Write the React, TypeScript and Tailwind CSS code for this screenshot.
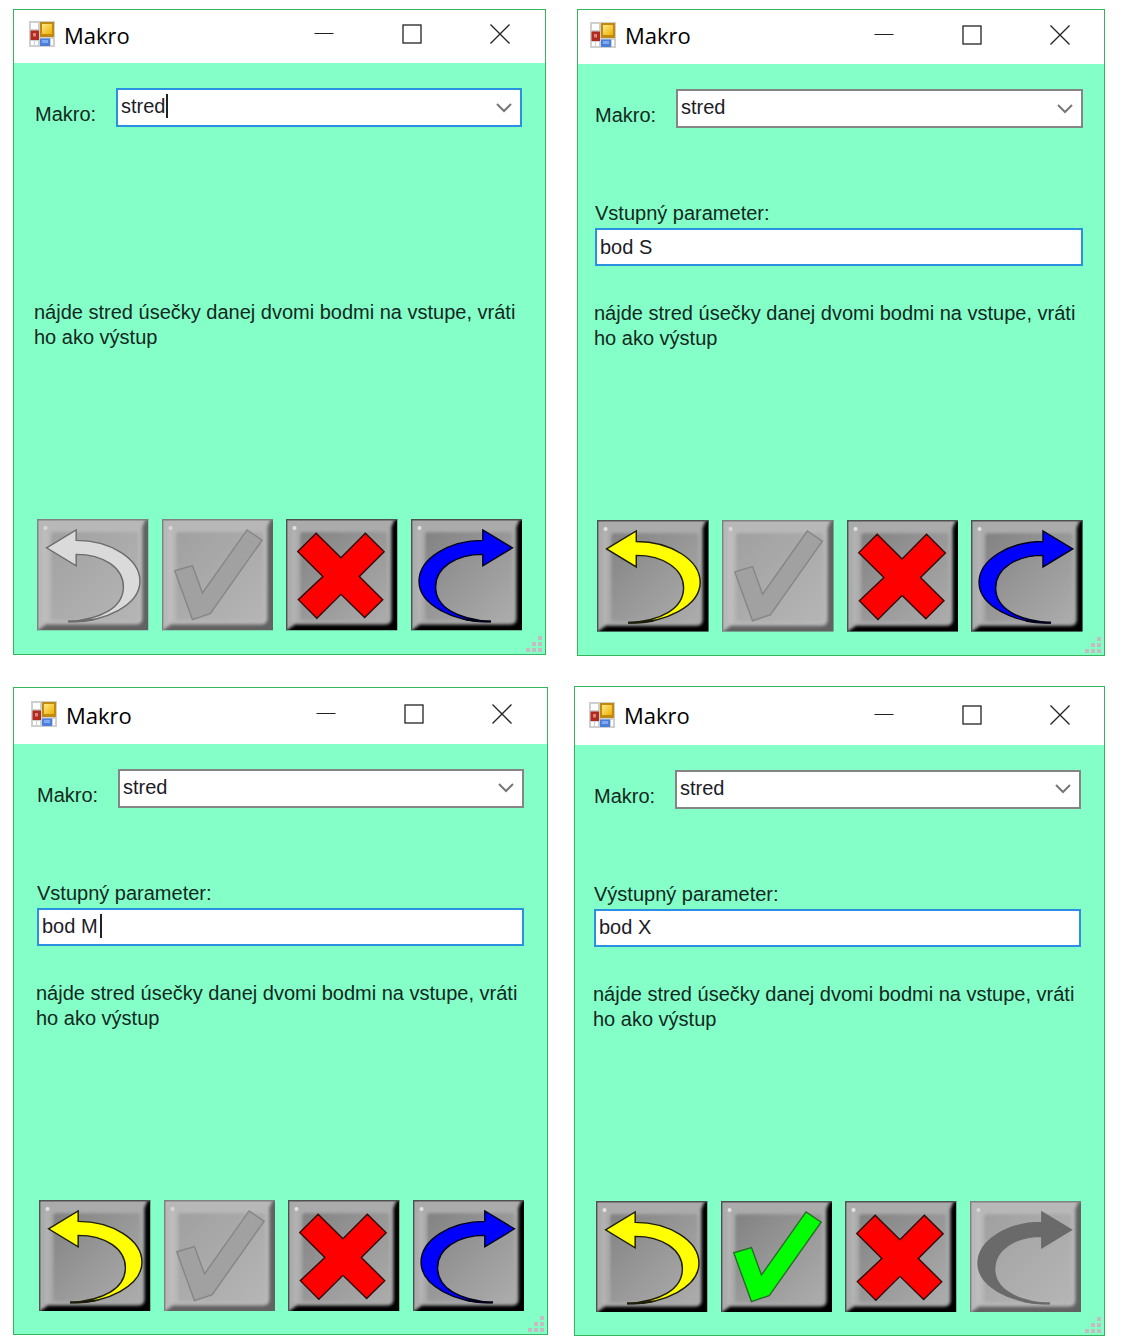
import { useId } from "react";

type ActionKind = "back" | "confirm" | "cancel" | "next";

interface MacroDialogProps {
  titleClass: string;
  bodyClass: string;
  macroFocused?: boolean;
  paramLabel?: string;
  paramValue?: string;
  paramCaret?: boolean;
  disabled: ActionKind[];
}

const ARROW =
  "M9.5 29 L39 11 V21.5 C73 21.5 102.5 40 102.5 62.5 C102.5 86 68 104 31 103 C64 101 86 89 86 68 C86 49 66 35.5 39 35.5 V47 Z";
const ARROW_TAIL = "M31 102.8 C40 103.4 48 102.6 56 101";
const CHECK = "M12.7 52 L30.3 46.7 L40.3 74.3 L84.7 11 L99.7 21.3 L48 95 L30.3 101 Z";
const CROSS =
  "M30 14.3 L54.7 39 L79 14.3 L97.7 33 L73 57.7 L96.3 81 L78.3 99 L54.7 75.7 L30.7 99.7 L12.3 81 L36.7 57.7 L11.7 32.7 Z";

const ICONS: Record<
  ActionKind,
  { label: string; d: string; tail?: string; mirror?: boolean; on: [string, string]; off: [string, string] }
> = {
  back: { label: "Späť", d: ARROW, tail: ARROW_TAIL, on: ["#ffff00", "#1c1c08"], off: ["#dadada", "#6c6c6c"] },
  confirm: { label: "Potvrdiť", d: CHECK, on: ["#00ff00", "#2a6a2a"], off: ["#a1a1a1", "#868686"] },
  cancel: { label: "Zrušiť", d: CROSS, on: ["#ff0000", "#300808"], off: ["#a1a1a1", "#868686"] },
  next: {
    label: "Ďalej",
    d: ARROW,
    tail: ARROW_TAIL,
    mirror: true,
    on: ["#0000ff", "#000018"],
    off: ["#6a6a6a", "#6a6a6a"],
  },
};

function ActionButton({ kind, disabled }: { kind: ActionKind; disabled: boolean }) {
  const id = useId().replace(/[^a-zA-Z0-9]/g, "");
  const icon = ICONS[kind];
  const [fill, stroke] = disabled ? icon.off : icon.on;
  return (
    <button type="button" aria-label={icon.label} disabled={disabled} className="block aspect-square w-full">
      <svg viewBox="0 0 111 112" preserveAspectRatio="none" className="block size-full">
        <defs>
          <linearGradient id={`${id}f`} x1="0" y1="0" x2="1" y2="1">
            <stop offset="0" stopColor={disabled ? "#a0a0a0" : "#828282"} />
            <stop offset="0.5" stopColor={disabled ? "#ababab" : "#989898"} />
            <stop offset="1" stopColor={disabled ? "#b5b5b5" : "#acacac"} />
          </linearGradient>
          <filter id={`${id}b`} x="-10%" y="-10%" width="120%" height="120%">
            <feGaussianBlur stdDeviation="1.6" />
          </filter>
          <clipPath id={`${id}c`}>
            <rect width="111" height="112" />
          </clipPath>
        </defs>
        <g clipPath={`url(#${id}c)`}>
          <rect width="111" height="112" fill={disabled ? "#626262" : "#000000"} />
          <g filter={`url(#${id}b)`}>
            <path
              d="M-4 -4 H110 L105 8 V100 Q105 106 99 106 H9 L-4 115 Z"
              fill={disabled ? "#b8b8b8" : "#ababab"}
            />
            <rect x="14" y="13" width="87" height="89" rx="3" fill={`url(#${id}f)`} />
            <path
              d="M8 104 V8"
              fill="none"
              stroke={disabled ? "#c0c0c0" : "#b6b6b6"}
              strokeWidth="3"
            />
          </g>
          <path d="M0.7 112 V0.7 H111" fill="none" stroke={disabled ? "#808080" : "#505050"} strokeWidth="1.4" />
          <circle cx="8.5" cy="9" r="2" fill={disabled ? "#d8d8d8" : "#e2e2e2"} />
        </g>
        <g transform={icon.mirror ? "matrix(-1 0 0 1 110.5 0)" : undefined} stroke={stroke}>
          <path d={icon.d} fill={fill} strokeWidth="1.4" />
          {icon.tail && <path d={icon.tail} fill="none" strokeWidth="2.2" />}
        </g>
      </svg>
    </button>
  );
}

function FormIcon() {
  const id = useId().replace(/[^a-zA-Z0-9]/g, "");
  return (
    <svg viewBox="0 0 26 26" className="size-[26px] shrink-0" aria-hidden="true">
      <defs>
        <linearGradient id={id} x1="0" y1="0" x2="1" y2="1">
          <stop offset="0" stopColor="#ffe88a" />
          <stop offset="1" stopColor="#eeb000" />
        </linearGradient>
      </defs>
      <rect width="26" height="26" fill="#cfcfcf" />
      <rect x="2" y="2" width="7" height="6" fill="#ffffff" />
      <rect x="2" y="20" width="3" height="4" fill="#ffffff" />
      <rect x="6" y="20" width="3" height="4" fill="#ffffff" />
      <rect x="22" y="18" width="2" height="6" fill="#ffffff" />
      <rect x="1.5" y="9.5" width="8.5" height="9.5" fill="#b02a20" />
      <rect x="4" y="12" width="3" height="3.5" fill="#dc8478" />
      <rect x="11" y="1" width="14" height="15" fill="#c08a10" />
      <rect x="13" y="3" width="10" height="10" fill={`url(#${id})`} />
      <rect x="11" y="17.5" width="10" height="7.5" fill="#4a7ed8" />
      <rect x="13" y="19" width="6" height="3" fill="#7fa9f0" />
    </svg>
  );
}

function TitleBar({ className }: { className: string }) {
  return (
    <header className={`flex items-center bg-white ${className}`}>
      <FormIcon />
      <h2 className="ml-[9px] flex-1 pt-px font-['Open_Sans',sans-serif] text-[22px] leading-7 text-black">Makro</h2>
      <button type="button" aria-label="Minimalizovať" className="flex h-8 w-[88px] items-center justify-center">
        <svg viewBox="0 0 20 20" className="size-5" fill="none" stroke="#222">
          <path d="M0.5 9.5 H19.5" />
        </svg>
      </button>
      <button type="button" aria-label="Maximalizovať" className="flex h-8 w-[88px] items-center justify-center">
        <svg viewBox="0 0 20 20" className="size-5" fill="none" stroke="#222" strokeWidth="1.3">
          <rect x="1" y="1" width="18" height="18" />
        </svg>
      </button>
      <button type="button" aria-label="Zavrieť" className="flex h-8 w-[88px] items-center justify-center">
        <svg viewBox="0 0 20 20" className="size-5" fill="none" stroke="#222" strokeWidth="1.3">
          <path d="M0.5 0.5 L19.5 19.5 M19.5 0.5 L0.5 19.5" />
        </svg>
      </button>
    </header>
  );
}

function MacroDialog({ titleClass, bodyClass, macroFocused, paramLabel, paramValue, paramCaret, disabled }: MacroDialogProps) {
  const id = useId();
  const actions: ActionKind[] = ["back", "confirm", "cancel", "next"];
  return (
    <section className="relative border border-[#35b55c] bg-[#84ffc8] font-['Liberation_Sans',sans-serif] text-[20px] leading-[25px] text-[#12281e]">
      <TitleBar className={titleClass} />
      <div className={`pt-[25px] pb-[23px] ${bodyClass}`}>
        <div className="flex h-[39px] items-end">
          <label htmlFor={`${id}-macro`} className="w-[81px] shrink-0">
            Makro:
          </label>
          <div
            className={`relative flex h-full min-w-0 flex-1 border-2 bg-white ${
              macroFocused ? "border-[#2b90e0]" : "border-[#858585]"
            }`}
          >
            <input
              id={`${id}-macro`}
              role="combobox"
              aria-expanded="false"
              defaultValue="stred"
              className="min-w-0 flex-1 bg-transparent pb-[2px] pl-[3px] text-[#1c1c28] outline-none"
            />
            {macroFocused && <span className="absolute top-1 left-[48px] h-6 w-0.5 bg-[#222]" />}
            <button type="button" aria-label="Zoznam makier" className="flex w-8 items-center justify-center">
              <svg viewBox="0 0 16 10" className="h-[10px] w-4" fill="none" stroke="#777" strokeWidth="2">
                <path d="M1 1 L8 8 L15 1" />
              </svg>
            </button>
          </div>
        </div>
        <div className="mt-[74px] h-[64px]">
          {paramLabel && (
            <>
              <label htmlFor={`${id}-param`} className="block h-[26px] leading-[22px]">
                {paramLabel}
              </label>
              <div className="relative h-[38px] border-2 border-[#2b90e0] bg-white">
                <input
                  id={`${id}-param`}
                  defaultValue={paramValue}
                  className="size-full bg-transparent pl-[3px] text-[#1c1c28] outline-none"
                />
                {paramCaret && <span className="absolute top-1 left-[61px] h-6 w-0.5 bg-[#222]" />}
              </div>
            </>
          )}
        </div>
        <p className="mt-[35px] -mr-4 -ml-px h-[50px]">
          nájde stred úsečky danej dvomi bodmi na vstupe, vráti
          <br />
          ho ako výstup
        </p>
        <div className="mt-[169px] ml-[2px] grid grid-cols-4 gap-[13px]">
          {actions.map((kind) => (
            <ActionButton key={kind} kind={kind} disabled={disabled.includes(kind)} />
          ))}
        </div>
      </div>
      <svg viewBox="0 0 16 16" className="absolute right-[3px] bottom-[2px] size-4" fill="#c4bcc0" aria-hidden="true">
        <rect x="12" y="0" width="4" height="4" />
        <rect x="6" y="6" width="4" height="4" />
        <rect x="12" y="6" width="4" height="4" />
        <rect x="0" y="12" width="4" height="4" />
        <rect x="6" y="12" width="4" height="4" />
        <rect x="12" y="12" width="4" height="4" />
      </svg>
    </section>
  );
}

export default function App() {
  return (
    <main className="min-h-screen bg-white pt-[9px] pr-[28px] pl-[13px]">
      <div className="grid grid-cols-[533fr_528fr] items-start gap-[31px]">
        <MacroDialog titleClass="h-[53px] pr-px pb-[5px] pl-[15px]" bodyClass="pl-[21px] pr-[23px]" macroFocused disabled={["back", "confirm"]} />
        <MacroDialog
          titleClass="h-[54px] pb-[5px] pl-[12px]"
          bodyClass="pl-[17px] pr-[21px]"
          paramLabel="Vstupný parameter:"
          paramValue="bod S"
          disabled={["confirm"]}
        />
      </div>
      <div className="mt-[30px] grid grid-cols-[535fr_531fr] items-center gap-[26px]">
        <MacroDialog
          titleClass="h-[56px] pr-px pb-[3px] pl-[17px]"
          bodyClass="pl-[23px] pr-[23px]"
          paramLabel="Vstupný parameter:"
          paramValue="bod M"
          paramCaret
          disabled={["confirm"]}
        />
        <MacroDialog
          titleClass="h-[58px] pb-[2px] pl-[14px]"
          bodyClass="pl-[19px] pr-[23px]"
          paramLabel="Výstupný parameter:"
          paramValue="bod X"
          disabled={["next"]}
        />
      </div>
    </main>
  );
}
